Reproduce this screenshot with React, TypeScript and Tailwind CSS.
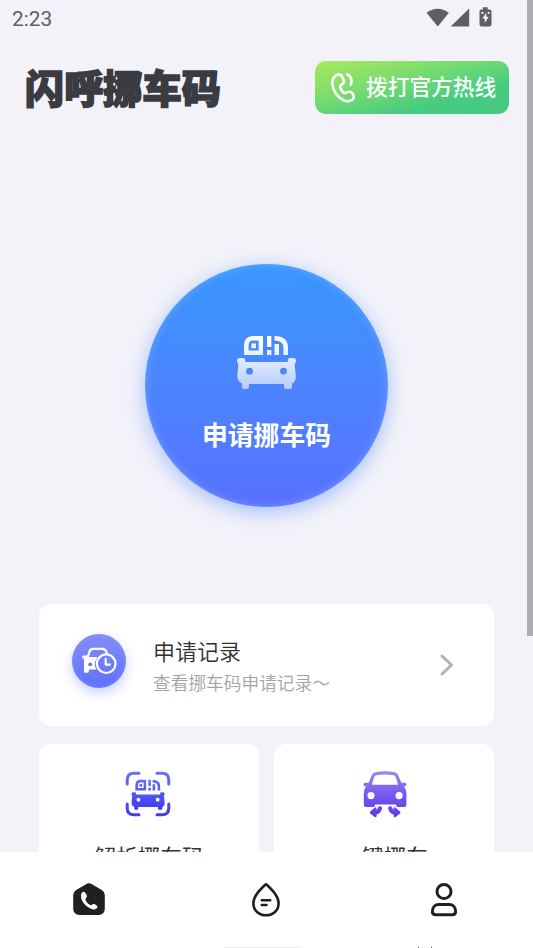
import type { ReactNode } from 'react';

function StatusBar() {
  return (
    <div className="flex h-9 shrink-0 items-center justify-between pl-3 pr-10 text-[#5f5f63]">
      <span className="pt-0.5 font-[Roboto,sans-serif] text-[20.8px] leading-9">2:23</span>
      <svg width="67" height="22" viewBox="0 0 66 22" fill="currentColor">
        <path d="M0 5.8Q11 -2.5 22.4 5.8L11.3 19.5Z" />
        <path d="M42.7 1.6V19.5H24.2Z" />
        <path d="M56.4 .2H61.2V2.4H63.2Q65 2.4 65 4.2V17.6Q65 19.4 63.2 19.4H54.8Q53 19.4 53 17.6V4.2Q53 2.4 54.8 2.4H56.4Z" />
        <path d="M59.8 5.8L55.8 11.5H58.2V16L62.2 9.8H59.8ZM54.8 5H57V6.8H54.8ZM61.2 5H63.2V6.8H61.2Z" fill="#f3f2f9" />
      </svg>
    </div>
  );
}

function HotlineIcon() {
  return (
    <svg width="26" height="32" viewBox="0 0 26 32" fill="none" stroke="white" strokeWidth="2.6" strokeLinecap="round" strokeLinejoin="round">
      <path d="M6.5 3.2Q10 1.2 11.9 4.3L13.6 7.6Q14.6 10.6 12 12.4Q9.6 13.8 10.4 16Q11.4 18.8 13.4 20.6Q14.6 21.4 16.2 20.6L19.4 19.8Q21.8 19.6 22.8 21.8L23.6 24.2Q24.2 26.6 22 28Q18.3 30.2 13.4 28.2Q6.3 24.4 3.2 16.2Q.4 6.8 6.5 3.2Z" />
      <path d="M17.4 2.4Q23.6 6.2 20.6 12.8" />
    </svg>
  );
}

function CarFront() {
  return (
    <>
      <path fillRule="evenodd" d="M3 22H6Q8.2 22 8.2 24.2V26H50.8V24.2Q50.8 22 53 22H56Q59 22 59 25Q59 27.3 57.6 27.8L58.8 40Q59 46.5 55 47.6V51Q55 53 53 53H49Q47 53 47 51V48H12V51Q12 53 10 53H7Q5 53 5 51V47.6Q0 45.5 .3 40L1.4 27.8Q0 27.2 0 25Q0 22 3 22ZM12.5 31.8A3.4 3.4 0 1 0 12.5 38.6A3.4 3.4 0 1 0 12.5 31.8ZM46.5 31.8A3.4 3.4 0 1 0 46.5 38.6A3.4 3.4 0 1 0 46.5 31.8Z" />
      <path fillRule="evenodd" d="M16 0H26V19H7V10Q7 0 16 0ZM16 4.6Q11.6 4.6 11.6 10V14.6H21.6V4.6ZM14.4 7.4H19V12.2H14.4Z" />
      <path d="M30 0H34.4V11H30ZM30 14H34.4V19H30ZM37.5 0Q51 0 51 12V19H46.4V12Q46.4 4.6 37.5 4.6ZM37.5 8H42V19H37.5Z" />
    </>
  );
}

function HeroCarIcon() {
  return (
    <svg width="59" height="54" viewBox="0 0 59 54" fill="url(#heroCar)">
      <defs>
        <linearGradient id="heroCar" x1="0" y1="0" x2="0" y2="54" gradientUnits="userSpaceOnUse">
          <stop offset="0" stopColor="#ffffff" />
          <stop offset=".35" stopColor="#e9effe" />
          <stop offset="1" stopColor="#b4cbff" />
        </linearGradient>
      </defs>
      <CarFront />
    </svg>
  );
}

function RecordIcon() {
  return (
    <svg width="36" height="28" viewBox="0 0 36 28" fill="none">
      <path d="M5.8 10L7.6 4.3Q8.4 1.8 11 1.8H20.5Q23 1.8 24 4L25 6.4" stroke="white" strokeWidth="2.2" strokeLinecap="round" />
      <path d="M1 8.5H5.8L6.8 10H15.7Q12.8 13 12.8 17Q12.8 20 14.3 22.5H6.8V24.4Q6.8 25.7 5.5 25.7H3.2Q2 25.7 2 24.4V11.4H1Q.2 11.4 .2 10.4V9.4Q.2 8.5 1 8.5Z" fill="white" />
      <circle cx="8.2" cy="17.3" r="1.9" fill="#6673f6" />
      <circle cx="24.2" cy="16.7" r="9.3" stroke="white" strokeWidth="2.2" />
      <path d="M23.7 11.8V17.6H28" stroke="white" strokeWidth="2.1" strokeLinecap="round" strokeLinejoin="round" />
    </svg>
  );
}

function ScanCarIcon() {
  return (
    <svg className="mr-0.5" width="46" height="46" viewBox="0 0 46 46" fill="none">
      <defs>
        <linearGradient id="scan" x1="0" y1="0" x2="0" y2="46" gradientUnits="userSpaceOnUse">
          <stop offset="0" stopColor="#6673f2" />
          <stop offset="1" stopColor="#4039ef" />
        </linearGradient>
        <linearGradient id="scanCar" x1="0" y1="0" x2="0" y2="54" gradientUnits="userSpaceOnUse">
          <stop offset="0" stopColor="#6270f4" />
          <stop offset="1" stopColor="#3e39f4" />
        </linearGradient>
      </defs>
      <path d="M2.2 13V9Q2.2 2.2 9 2.2H14M32 2.2H37Q43.8 2.2 43.8 9V13M2.2 33V37Q2.2 43.8 9 43.8H14M32 43.8H37Q43.8 43.8 43.8 37V33" stroke="url(#scan)" strokeWidth="3" strokeLinecap="round" />
      <g transform="translate(6.4 8.8) scale(.565)" fill="url(#scanCar)">
        <CarFront />
      </g>
    </svg>
  );
}

function MoveCarIcon() {
  return (
    <svg className="ml-px" width="44" height="47" viewBox="0 0 44 47" fill="url(#move)">
      <defs>
        <linearGradient id="move" x1="0" y1="0" x2="0" y2="47" gradientUnits="userSpaceOnUse">
          <stop offset="0" stopColor="#9b8bf0" />
          <stop offset=".5" stopColor="#7559ee" />
          <stop offset="1" stopColor="#5b38ec" />
        </linearGradient>
      </defs>
      <path fillRule="evenodd" d="M12 1.2Q22-.8 32 1.2Q34.3 1.8 35.4 4.4L38.3 11.7H41.5Q43.7 11.8 43.6 13.6Q43.5 15.4 41 15.5Q43.4 18.4 43.4 22.5V34Q43.4 36 41.4 36H35Q33 36 33 33.4H12V34Q12 36 10 36H3Q.8 36 .8 34V22.5Q.8 18.4 3 15.5Q.4 15.4 .3 13.6Q.2 11.8 2.5 11.7H5.7L8.6 4.4Q9.8 1.8 12 1.2ZM13.4 4.2Q11.8 4.6 11.2 6.3L8.8 13.7H35.2L32.8 6.3Q32.2 4.6 30.6 4.2Q22 2.8 13.4 4.2ZM8 21A3.6 3.6 0 1 0 8 28.2A3.6 3.6 0 1 0 8 21ZM36.1 21A3.6 3.6 0 1 0 36.1 28.2A3.6 3.6 0 1 0 36.1 21Z" />
      <path d="M16.8 35.2Q19.4 35.2 19 37.4Q18.2 42 13.6 43.6V45.2Q13.4 47 11.7 45.9L7.2 42.5Q6.2 41.4 7.2 40.5L11.6 36.8Q13.4 35.6 13.6 37.4V38.9Q14.7 38.2 14.9 36.7Q15.2 35.2 16.8 35.2ZM27.4 35.2Q24.8 35.2 25.2 37.4Q26 42 30.6 43.6V45.2Q30.8 47 32.5 45.9L37 42.5Q38 41.4 37 40.5L32.6 36.8Q30.8 35.6 30.6 37.4V38.9Q29.5 38.2 29.3 36.7Q29 35.2 27.4 35.2Z" />
    </svg>
  );
}

interface ServiceCardProps {
  title: string;
  icon: ReactNode;
}

function ServiceCard({ title, icon }: ServiceCardProps) {
  return (
    <div className="flex h-[140px] flex-1 flex-col items-center rounded-xl bg-white pt-[27px]">
      <div className="h-[47px]">{icon}</div>
      <div className="mt-[21px] whitespace-nowrap text-[22px] leading-8 text-[#343438]">{title}</div>
    </div>
  );
}

function TabBar() {
  return (
    <nav className="relative grid h-24 shrink-0 grid-cols-3 justify-items-center overflow-hidden bg-white pt-[30px] text-[#202022]">
      <svg width="34" height="36" viewBox="0 0 34 36">
        <path d="M14 2.2Q17 .4 20 2.2L29.8 8Q32.8 9.8 32.8 13V26.5Q32.8 33 26.3 33H7.7Q1.2 33 1.2 26.5V13Q1.2 9.8 4.2 8Z" fill="currentColor" />
        <path d="M9.8 10.8Q11.7 8.7 13.4 10.9L14.8 13.3Q15.6 14.8 14 16Q12.9 17 13.7 18.4Q15.2 21.4 18 23Q19.3 23.5 20.1 22.6Q21.5 21.4 23 22.3L24.9 23.7Q26.5 25 24.5 26.6Q21.6 28.7 17.4 26.1Q11.5 22.6 9.3 16.7Q8.2 12.9 9.8 10.8Z" fill="white" />
      </svg>
      <svg width="34" height="36" viewBox="0 0 34 36" fill="none" stroke="currentColor" strokeWidth="2.6" strokeLinecap="round" strokeLinejoin="round">
        <path d="M16.2 2.8Q17 1.9 17.8 2.8C24 8.8 29.6 14.3 29.6 21.2C29.6 28.6 24 33.3 17 33.3S4.4 28.6 4.4 21.2C4.4 14.3 10 8.8 16.2 2.8Z" />
        <path d="M12.8 18.3H21.2M12.8 23H17.5" />
      </svg>
      <svg width="34" height="36" viewBox="0 0 34 36" fill="none" stroke="currentColor" strokeWidth="3">
        <circle cx="17" cy="9.5" r="7" />
        <path d="M11.8 22.6H22.2C26 22.6 28.6 25.6 28.6 29.5Q28.6 32.7 25.4 32.7H8.6Q5.4 32.7 5.4 29.5C5.4 25.6 8 22.6 11.8 22.6Z" />
      </svg>
      {/* gesture handle peeking above the bottom edge */}
      <div className="absolute -bottom-1 left-[224px] h-[5px] w-[76px] bg-[#ededf0]" />
      <div className="absolute bottom-0 left-[418px] h-px w-px bg-[#55555a]" />
      <div className="absolute bottom-0 left-[431px] h-px w-px bg-[#55555a]" />
    </nav>
  );
}

export default function App() {
  return (
    <div className="relative flex h-[948px] w-[533px] flex-col overflow-hidden bg-[#f3f2f9] font-['Noto_Sans_CJK_SC',sans-serif]">
      <StatusBar />

      <main className="flex min-h-0 flex-1 flex-col overflow-hidden">
        <header className="mt-[25px] flex h-[53px] shrink-0 items-center justify-between pl-[25px] pr-6">
          <h1 className="mb-1 whitespace-nowrap text-[39.2px] font-black leading-[50px] text-[#3b3b42] [-webkit-text-stroke:1.6px_#3b3b42]">
            闪呼挪车码
          </h1>
          <button className="flex h-[53px] w-[194px] items-center rounded-[11px] bg-[linear-gradient(165deg,#abe85d_0%,#78dc70_38%,#46cb82_72%,#43ca82_100%)] pl-[15px] text-white">
            <HotlineIcon />
            <span className="mb-[3px] ml-2.5 whitespace-nowrap text-[21.7px] font-medium leading-[50px]">拨打官方热线</span>
          </button>
        </header>

        <button className="mx-auto mt-[150px] flex size-[243px] shrink-0 flex-col items-center rounded-full bg-gradient-to-b from-[#3797ff] to-[#5870ff] pt-[72px] shadow-[0_5px_20px_rgba(75,135,255,0.48),inset_0_0_10px_rgba(150,190,255,0.5)]">
          <HeroCarIcon />
          <span className="mt-6 whitespace-nowrap text-[25.8px] font-bold leading-10 text-white">申请挪车码</span>
        </button>

        <section className="mt-[97px] flex shrink-0 flex-col gap-[18px] pl-[39px] pr-[39px]">
          <div className="flex h-[122px] items-center rounded-xl bg-white pl-[33px] pr-[39px]">
            <div className="mb-2 flex size-[54px] items-center justify-center rounded-full bg-gradient-to-b from-[#858df5] to-[#6070ff] pl-px shadow-[0_5px_12px_rgba(100,130,255,0.36),inset_0_0_5px_rgba(150,165,255,0.5)]">
              <RecordIcon />
            </div>
            <div className="ml-[27px] flex-1 whitespace-nowrap">
              <div className="text-[22px] font-[350] leading-[30px] text-[#2f2f34]">申请记录</div>
              <div className="mt-[3px] text-[17.7px] font-[350] leading-7 text-[#a3a3a6]">查看挪车码申请记录～</div>
            </div>
            <svg width="16" height="24" viewBox="0 0 16 24" fill="none" stroke="#b3b3b6" strokeWidth="3" strokeLinecap="round" strokeLinejoin="round">
              <path d="M3 3L12.5 12L3 21" />
            </svg>
          </div>
          <div className="flex gap-[15px]">
            <ServiceCard title="解析挪车码" icon={<ScanCarIcon />} />
            <ServiceCard title="一键挪车" icon={<MoveCarIcon />} />
          </div>
        </section>
      </main>

      <TabBar />
      {/* overlay scrollbar */}
      <div className="absolute right-0 top-0 h-[636px] w-1.5 bg-[#acacb1]" />
    </div>
  );
}
